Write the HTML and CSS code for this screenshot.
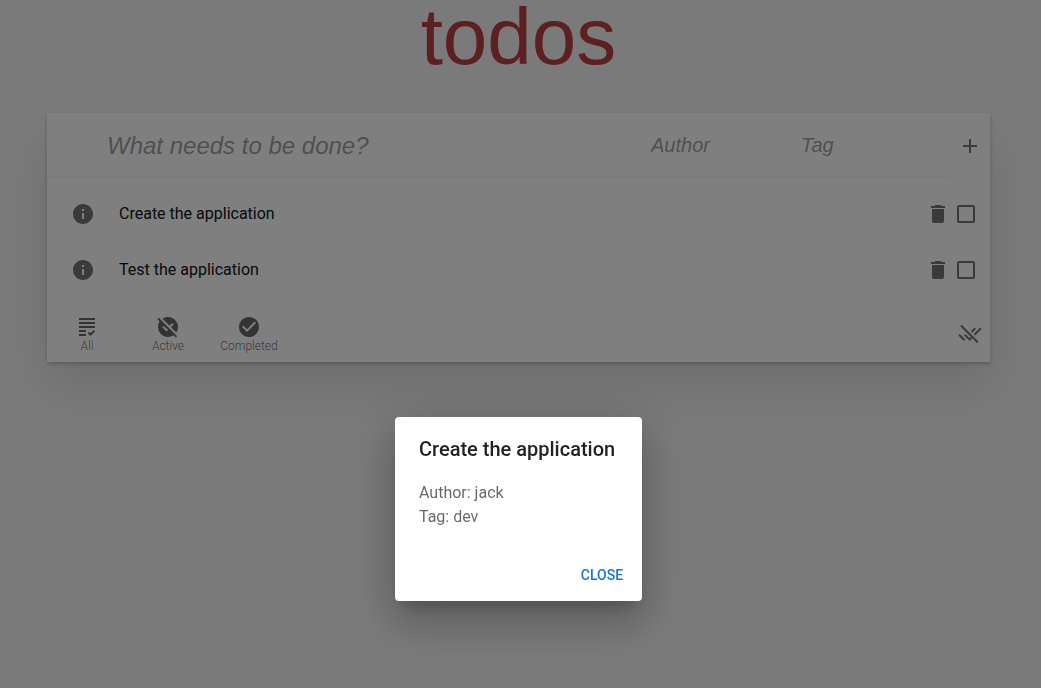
FILE: index.html
```html
<!DOCTYPE html>
<html lang="en">
<head>
<meta charset="utf-8">
<meta name="viewport" content="width=device-width, initial-scale=1">
<title>todos</title>
<link rel="stylesheet" href="styles.css">
</head>
<body>
<svg class="sprite" aria-hidden="true">
  <symbol id="info" viewBox="0 0 24 24"><path d="M12 2C6.48 2 2 6.48 2 12s4.48 10 10 10 10-4.48 10-10S17.52 2 12 2zm1 15h-2v-6h2v6zm0-8h-2V7h2v2z"/></symbol>
  <symbol id="trash" viewBox="0 0 24 24"><path d="M6 19c0 1.1.9 2 2 2h8c1.1 0 2-.9 2-2V7H6v12zM19 4h-3.5l-1-1h-5l-1 1H5v2h14V4z"/></symbol>
</svg>
<main class="page">
  <h1 class="title">todos</h1>
  <section class="card">
    <form class="entry">
      <input class="field field-task" type="text" placeholder="What needs to be done?" aria-label="Task">
      <input class="field field-small" type="text" placeholder="Author" aria-label="Author">
      <input class="field field-small" type="text" placeholder="Tag" aria-label="Tag">
      <button class="icon-button add" type="button" aria-label="Add"><svg class="icon" viewBox="0 0 24 24"><path d="M19 13h-6v6h-2v-6H5v-2h6V5h2v6h6v2z"/></svg></button>
    </form>
    <ul class="list">
      <li class="item">
        <button class="icon-button" type="button" aria-label="Details"><svg class="icon"><use href="#info"/></svg></button>
        <label class="item-text" for="todo-1">Create the application</label>
        <div class="item-actions">
          <button class="icon-button" type="button" aria-label="Delete"><svg class="icon"><use href="#trash"/></svg></button>
          <input class="check" type="checkbox" id="todo-1">
        </div>
      </li>
      <li class="item">
        <button class="icon-button" type="button" aria-label="Details"><svg class="icon"><use href="#info"/></svg></button>
        <label class="item-text" for="todo-2">Test the application</label>
        <div class="item-actions">
          <button class="icon-button" type="button" aria-label="Delete"><svg class="icon"><use href="#trash"/></svg></button>
          <input class="check" type="checkbox" id="todo-2">
        </div>
      </li>
    </ul>
    <footer class="footer">
      <nav class="filters" aria-label="Filter">
        <button class="filter" type="button"><svg class="icon" viewBox="0 0 24 24"><path d="M4 7h16v2H4V7zm0 6h16v-2H4v2zm0 4h7v-2H4v2zm0 4h7v-2H4v2zm11.41-2.83L14 16.75l-1.41 1.41L15.41 21 20 16.42 18.58 15l-3.17 3.17zM4 3v2h16V3H4z"/></svg><span>All</span></button>
        <button class="filter" type="button"><svg class="icon" viewBox="0 0 24 24"><path d="M21.19 21.19 2.81 2.81 1.39 4.22l2.27 2.27C2.61 8.07 2 9.96 2 12c0 5.52 4.48 10 10 10 2.04 0 3.93-.61 5.51-1.66l2.27 2.27 1.41-1.42zM10.59 16.6l-4.24-4.24 1.41-1.41 2.83 2.83.18-.18 1.41 1.41-1.59 1.59zm3-5.84-7.1-7.1C8.07 2.61 9.96 2 12 2c5.52 0 10 4.48 10 10 0 2.04-.61 3.93-1.66 5.51l-5.34-5.34 2.65-2.65-1.41-1.41-2.65 2.65z"/></svg><span>Active</span></button>
        <button class="filter" type="button"><svg class="icon" viewBox="0 0 24 24"><path d="M12 2C6.48 2 2 6.48 2 12s4.48 10 10 10 10-4.48 10-10S17.52 2 12 2zm-2 15-5-5 1.41-1.41L10 14.17l7.59-7.59L19 8l-9 9z"/></svg><span>Completed</span></button>
      </nav>
      <button class="icon-button clear" type="button" aria-label="Clear completed"><svg class="icon" viewBox="0 0 24 24"><path d="M1.79 12l5.58 5.59L5.96 19 .37 13.41 1.79 12zm.45-7.78L12.9 14.89l-1.28 1.28L7.44 12l-1.41 1.41L11.62 19l2.69-2.69 4.89 4.89 1.41-1.41L3.65 2.81 2.24 4.22zm14.9 9.27L23.62 7 22.2 5.59l-6.48 6.48 1.42 1.42zM17.96 7l-1.41-1.41-3.65 3.66 1.41 1.41L17.96 7z"/></svg></button>
    </footer>
  </section>
</main>
<div class="backdrop">
  <div class="dialog" role="dialog" aria-modal="true" aria-labelledby="dialog-title">
    <h2 class="dialog-title" id="dialog-title">Create the application</h2>
    <p class="dialog-text">Author: jack<br>Tag: dev</p>
    <div class="dialog-actions"><button class="close" type="button">CLOSE</button></div>
  </div>
</div>
</body>
</html>
```
FILE: styles.css
```css
* { box-sizing: border-box; }
body {
  margin: 0;
  min-height: 100vh;
  background: #f5f5f5;
  font-family: Roboto, "Liberation Sans", sans-serif;
  font-size: 16px;
  line-height: 24px;
  color: #111;
}
button { margin: 0; padding: 0; border: 0; background: none; font: inherit; cursor: pointer; }
.sprite { display: none; }
.icon { display: block; width: 24px; height: 24px; fill: currentColor; }
.page { min-height: 100vh; padding: 0 51px 0 47px; }
.title {
  margin: 0 0 39px;
  font: 400 80px/74px "Liberation Sans", sans-serif;
  text-align: center;
  color: #b83f45;
}
.card {
  background: #fff;
  box-shadow: 0 2px 4px rgba(0, 0, 0, .2), 0 25px 50px rgba(0, 0, 0, .1);
}
.entry { display: flex; }
.field {
  height: 65px;
  min-width: 0;
  padding: 0 1px;
  border: 0;
  background: transparent;
  box-shadow: inset 0 -2px 1px rgba(0, 0, 0, .03);
  font: 20px "Liberation Sans", sans-serif;
  color: #111;
}
.field::placeholder { font-style: italic; color: rgba(0, 0, 0, .4); opacity: 1; }
.field-task { flex: 1; padding-left: 60px; font-size: 24px; }
.field-small { width: 150px; }
.icon-button { color: rgba(0, 0, 0, .54); }
.add, .clear { display: grid; place-items: center; width: 40px; }
.list { margin: 0; padding: 8px 0; list-style: none; }
.item { display: flex; align-items: center; gap: 24px; height: 56px; padding: 0 12px 0 24px; }
.item-text { flex: 1; }
.item-actions { display: flex; align-items: center; gap: 4px; }
.check {
  appearance: none;
  width: 18px;
  height: 18px;
  margin: 3px;
  border: 2px solid rgba(0, 0, 0, .54);
  border-radius: 2px;
}
.footer { display: flex; justify-content: space-between; height: 56px; }
.filters { display: flex; gap: 1px; }
.filter {
  display: flex;
  flex-direction: column;
  align-items: center;
  justify-content: center;
  width: 80px;
  color: rgba(0, 0, 0, .6);
  font-size: 12px;
  font-weight: 300;
  line-height: 14px;
}
.backdrop {
  position: fixed;
  inset: 0;
  display: flex;
  align-items: center;
  justify-content: center;
  padding: 330px 4px 0 0;
  background: rgba(0, 0, 0, .5);
}
.dialog {
  min-width: 247px;
  border-radius: 4px;
  background: #fff;
  box-shadow: 0 11px 15px -7px rgba(0, 0, 0, .2), 0 24px 38px 3px rgba(0, 0, 0, .14), 0 9px 46px 8px rgba(0, 0, 0, .12);
}
.dialog-title {
  margin: 0;
  padding: 16px 24px;
  font-size: 20px;
  font-weight: 500;
  line-height: 32px;
  color: rgba(0, 0, 0, .87);
}
.dialog-text { margin: 0; padding: 0 24px 20px; color: rgba(0, 0, 0, .6); }
.dialog-actions { display: flex; justify-content: flex-end; padding: 8px; }
.close {
  min-width: 64px;
  padding: 6px 8px;
  border-radius: 4px;
  font-size: 14px;
  font-weight: 500;
  color: #1976d2;
}
```
